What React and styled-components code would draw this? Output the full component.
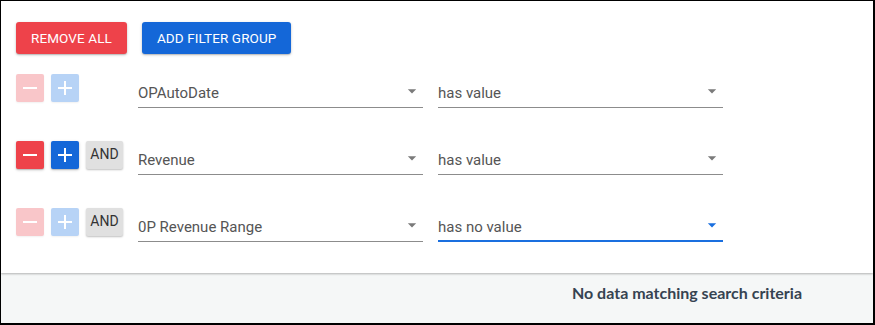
import React from "react";
import styled, { createGlobalStyle } from "styled-components";

const Global = createGlobalStyle`
  html, body { margin: 0; padding: 0; background: #fff; }
  * { box-sizing: border-box; }
`;

const Frame = styled.div`
  width: 875px;
  height: 325px;
  border-style: solid;
  border-color: #000;
  border-width: 1px 2px 2px 1px;
  display: flex;
  flex-direction: column;
  background: #f5f7f7;
  overflow: hidden;
  font-family: Roboto, "Liberation Sans", sans-serif;
`;

const Card = styled.div`
  background: #fff;
  height: 272px;
  padding: 21px 15px 0 15px;
  box-shadow: 0 1px 2px rgba(0, 0, 0, 0.28);
  position: relative;
  z-index: 1;
`;

const Toolbar = styled.div`
  display: flex;
  gap: 15px;
`;

const ActionButton = styled.button`
  height: 32px;
  padding: 0 15px;
  border: none;
  border-radius: 3px;
  background: ${(p) => p.$bg};
  color: #fff;
  font-family: Roboto, "Liberation Sans", sans-serif;
  font-size: 13.5px;
  font-weight: 400;
  letter-spacing: 0.1px;
  text-transform: uppercase;
  box-shadow: 0 1px 3px rgba(0, 0, 0, 0.22), 0 1px 1px rgba(0, 0, 0, 0.12);
  cursor: pointer;
`;

const Rows = styled.div`
  margin-top: 20px;
  display: flex;
  flex-direction: column;
  gap: 33px;
`;

const Row = styled.div`
  display: flex;
  align-items: flex-start;
  height: 34px;
`;

const Controls = styled.div`
  display: flex;
  gap: 7px;
  width: 122px;
`;

const IconButton = styled.button`
  width: 28px;
  height: 28px;
  padding: 0;
  border: none;
  border-radius: 2px;
  background: ${(p) => (p.disabled ? p.$light : p.$bg)};
  display: flex;
  align-items: center;
  justify-content: center;
  box-shadow: ${(p) =>
    p.disabled ? "0 1px 2px rgba(0,0,0,0.06)" : "0 1px 3px rgba(0,0,0,0.22), 0 1px 1px rgba(0,0,0,0.12)"};
`;

const AndButton = styled.button`
  width: 37px;
  height: 28px;
  padding: 0 0 2px;
  border: none;
  border-radius: 2px;
  background: #e0e0e0;
  color: #333;
  font-family: Roboto, "Liberation Sans", sans-serif;
  font-size: 14px;
  box-shadow: 0 1px 2px rgba(0, 0, 0, 0.25);
`;

const Select = styled.div`
  position: relative;
  width: 285px;
  height: 34px;
  margin-right: 15px;
  padding-top: 10px;
  border-bottom: ${(p) => (p.$focused ? "2px solid #1a6fdf" : "1px solid #8c8c8c")};
  color: #555;
  font-size: 15px;
  line-height: 19px;
`;

const Arrow = styled.svg`
  position: absolute;
  right: 1px;
  top: 7px;
  width: 20px;
  height: 20px;
  fill: ${(p) => (p.$focused ? "#1a6fdf" : "#7a7a7a")};
`;

const Footer = styled.div`
  flex: 1;
  padding: 10px 71px 0 0;
  text-align: right;
  font-family: Lato, "Open Sans", sans-serif;
  font-weight: 700;
  font-size: 16px;
  color: #364351;
`;

const Glyph = ({ plus }) => (
  <svg width="28" height="28" viewBox="0 0 28 28">
    <line x1="7" y1="14" x2="21" y2="14" stroke="#fff" strokeWidth="2" />
    {plus && <line x1="14" y1="7" x2="14" y2="21" stroke="#fff" strokeWidth="2" />}
  </svg>
);

const Dropdown = ({ value, focused }) => (
  <Select $focused={focused}>
    {value}
    <Arrow $focused={focused} viewBox="0 0 24 24">
      <path d="M7 10l5 5 5-5z" />
    </Arrow>
  </Select>
);

const rows = [
  { field: "OPAutoDate", op: "has value", enabled: false, and: false },
  { field: "Revenue", op: "has value", enabled: true, and: true },
  { field: "0P Revenue Range", op: "has no value", enabled: false, and: true, focused: true },
];

export default function App() {
  return (
    <>
      <Global />
      <Frame>
        <Card>
          <Toolbar>
            <ActionButton $bg="#ee424a">Remove All</ActionButton>
            <ActionButton $bg="#1467d8">Add Filter Group</ActionButton>
          </Toolbar>
          <Rows>
            {rows.map((r, i) => (
              <Row key={i}>
                <Controls>
                  <IconButton disabled={!r.enabled} $bg="#ee424a" $light="#f9c6c9">
                    <Glyph />
                  </IconButton>
                  <IconButton disabled={!r.enabled} $bg="#1467d8" $light="#b7d3f6">
                    <Glyph plus />
                  </IconButton>
                  {r.and && <AndButton>AND</AndButton>}
                </Controls>
                <Dropdown value={r.field} />
                <Dropdown value={r.op} focused={r.focused} />
              </Row>
            ))}
          </Rows>
        </Card>
        <Footer>No data matching search criteria</Footer>
      </Frame>
    </>
  );
}
